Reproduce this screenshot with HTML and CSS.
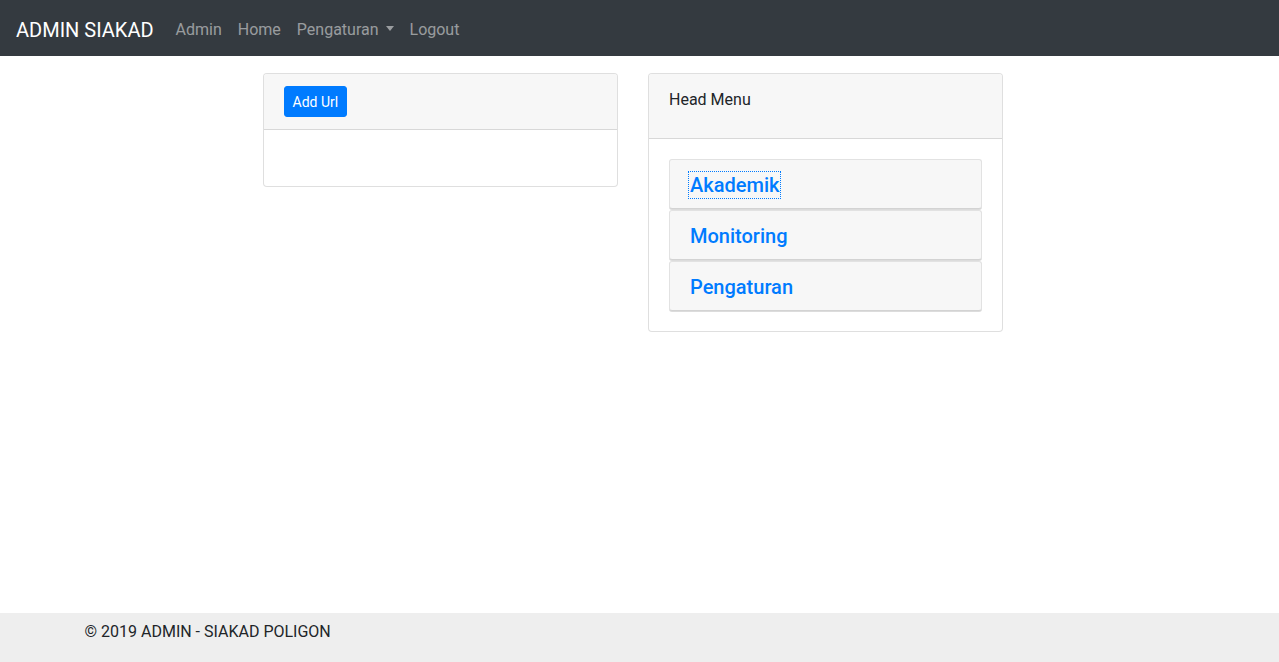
FILE: index.html
```html
<!DOCTYPE html>
<html lang="id">
<head>
<meta charset="utf-8">
<title>ADMIN SIAKAD</title>
<link rel="stylesheet" href="styles.css">
</head>
<body>
<nav class="navbar">
  <a class="brand" href="#">ADMIN SIAKAD</a>
  <ul class="nav">
    <li><a class="nav-link" href="#">Admin</a></li>
    <li><a class="nav-link" href="#">Home</a></li>
    <li><a class="nav-link dropdown" href="#">Pengaturan <span class="caret"></span></a></li>
    <li><a class="nav-link" href="#">Logout</a></li>
  </ul>
</nav>
<main class="content">
  <section class="card">
    <div class="card-header">
      <button class="btn" type="button">Add Url</button>
    </div>
    <div class="card-body empty"></div>
  </section>
  <section class="card">
    <div class="card-header">
      <p class="header-text">Head Menu</p>
    </div>
    <div class="card-body">
      <div class="menu-item"><a class="menu-link focused" href="#">Akademik</a></div>
      <div class="menu-item"><a class="menu-link" href="#">Monitoring</a></div>
      <div class="menu-item"><a class="menu-link" href="#">Pengaturan</a></div>
    </div>
  </section>
</main>
<footer class="footer">
  <div class="footer-inner">© 2019 ADMIN - SIAKAD POLIGON</div>
</footer>
</body>
</html>
```

FILE: styles.css
```css
* { box-sizing: border-box; }
html, body { height: 100%; }
body {
  margin: 0;
  font-family: Roboto, "Liberation Sans", Arial, sans-serif;
  font-size: 16px;
  line-height: 1.5;
  color: #212529;
  background: #fff;
  display: flex;
  flex-direction: column;
  min-height: 100vh;
}
a { text-decoration: none; }

.navbar {
  height: 56px;
  background: #343a40;
  display: flex;
  align-items: center;
  padding: 10px 16px 6px;
}
.brand {
  font-size: 20px;
  line-height: 30px;
  padding: 5px 0;
  margin-right: 14px;
  color: #fff;
}
.nav {
  list-style: none;
  margin: 0;
  padding: 0;
  display: flex;
}
.nav-link {
  display: block;
  padding: 8px 8px;
  color: rgba(255, 255, 255, 0.5);
  line-height: 24px;
}
.caret {
  display: inline-block;
  margin-left: 3px;
  vertical-align: 4px;
  border-top: 5px solid;
  border-left: 4.5px solid transparent;
  border-right: 4.5px solid transparent;
}

.content {
  display: flex;
  align-items: flex-start;
  gap: 30px;
  padding-top: 17px;
  margin-left: 263px;
}
.card {
  width: 355px;
  border: 1px solid rgba(0, 0, 0, 0.125);
  border-radius: 4px;
  background: #fff;
}
.card-header {
  background: #f7f7f7;
  border-bottom: 1px solid rgba(0, 0, 0, 0.125);
  padding: 12px 20px;
  border-radius: 3px 3px 0 0;
}
.header-text {
  margin: 0 0 14px;
  padding-top: 2px;
  line-height: 24px;
}
.btn {
  display: block;
  font-family: inherit;
  font-size: 14px;
  line-height: 21px;
  padding: 5px 7.5px 3px;
  color: #fff;
  background: #007bff;
  border: 1px solid #007bff;
  border-radius: 3px;
}
.card-body {
  padding: 20px;
}
.card-body.empty {
  min-height: 56px;
}
.menu-item {
  background: #f7f7f7;
  border: 1px solid #e2e2e2;
  border-bottom-color: #d3d3d3;
  box-shadow: 0 1px 0 #dcdcdc;
  border-radius: 3px;
  padding: 13px 20px 11px;
  font-size: 20px;
  line-height: 24px;
  height: 50px;
  margin-bottom: 1px;
}
.menu-item:last-child { margin-bottom: 0; }
.menu-link {
  font-size: 20px;
  font-weight: 500;
  line-height: 24px;
  color: #007bff;
}
.menu-link.focused {
  outline: 1px dotted #007bff;
  outline-offset: 1px;
}

.footer {
  margin-top: auto;
  height: 49px;
  background: #eeeeee;
  padding-top: 7px;
}
.footer-inner {
  width: 1140px;
  margin: 0 auto;
  padding: 0 15px;
  line-height: 24px;
}
```
